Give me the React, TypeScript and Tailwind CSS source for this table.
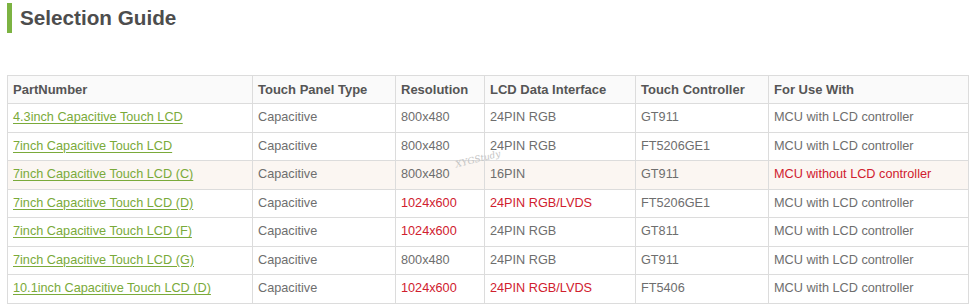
const rows = [
  { part: "4.3inch Capacitive Touch LCD", res: "800x480", iface: "24PIN RGB", ctrl: "GT911", use: "MCU with LCD controller" },
  { part: "7inch Capacitive Touch LCD", res: "800x480", iface: "24PIN RGB", ctrl: "FT5206GE1", use: "MCU with LCD controller" },
  { part: "7inch Capacitive Touch LCD (C)", res: "800x480", iface: "16PIN", ctrl: "GT911", use: "MCU without LCD controller", hl: true, redUse: true },
  { part: "7inch Capacitive Touch LCD (D)", res: "1024x600", iface: "24PIN RGB/LVDS", ctrl: "FT5206GE1", use: "MCU with LCD controller", redRes: true, redIface: true },
  { part: "7inch Capacitive Touch LCD (F)", res: "1024x600", iface: "24PIN RGB", ctrl: "GT811", use: "MCU with LCD controller", redRes: true },
  { part: "7inch Capacitive Touch LCD (G)", res: "800x480", iface: "24PIN RGB", ctrl: "GT911", use: "MCU with LCD controller" },
  { part: "10.1inch Capacitive Touch LCD (D)", res: "1024x600", iface: "24PIN RGB/LVDS", ctrl: "FT5406", use: "MCU with LCD controller", redRes: true, redIface: true },
]

const red = "text-[#d0202e]"
const gray = "text-[#6e6e6e]"

export default function App() {
  return (
    <div className="w-[972px] h-[306px] bg-white font-['Liberation_Sans',Arial,sans-serif]">
      {/* Heading */}
      <div className="flex items-center pt-[3px] pl-[7px]">
        <div className="w-[5px] h-[30px] bg-[#7cb342]" />
        <h2 className="ml-[8px] text-[20.7px] font-bold text-[#4d4d4d] leading-[30px]">Selection Guide</h2>
      </div>

      {/* Table */}
      <div className="relative mt-[42px] ml-[7px] w-[962px]">
        <table className="w-full border-collapse text-[12.7px] table-fixed">
          <colgroup>
            <col className="w-[245px]" />
            <col className="w-[143px]" />
            <col className="w-[89px]" />
            <col className="w-[151px]" />
            <col className="w-[133px]" />
            <col />
          </colgroup>
          <thead>
            <tr className="h-[28px] bg-[#fafafa]">
              {["PartNumber", "Touch Panel Type", "Resolution", "LCD Data Interface", "Touch Controller", "For Use With"].map((h) => (
                <th key={h} className="border border-[#dcdcdc] px-[5px] text-left font-bold text-[13px] text-[#555]">
                  {h}
                </th>
              ))}
            </tr>
          </thead>
          <tbody>
            {rows.map((r) => (
              <tr key={r.part} className={`h-[28.5px] ${r.hl ? "bg-[#fbf6f2]" : "bg-white"}`}>
                <td className="border border-[#dcdcdc] px-[5px]">
                  <a href="#" className="text-[#7aaa3a] underline underline-offset-2">{r.part}</a>
                </td>
                <td className={`border border-[#dcdcdc] px-[5px] ${gray}`}>Capacitive</td>
                <td className={`border border-[#dcdcdc] px-[5px] ${r.redRes ? red : gray}`}>{r.res}</td>
                <td className={`border border-[#dcdcdc] px-[5px] ${r.redIface ? red : gray}`}>{r.iface}</td>
                <td className={`border border-[#dcdcdc] px-[5px] ${gray}`}>{r.ctrl}</td>
                <td className={`border border-[#dcdcdc] px-[5px] ${r.redUse ? red : gray}`}>{r.use}</td>
              </tr>
            ))}
          </tbody>
        </table>
        {/* watermark */}
        <span className="absolute left-[448px] top-[78px] -rotate-[14deg] italic text-[9px] text-[#c4c4c4] font-['DejaVu_Serif',serif]">
          XYGStudy
        </span>
      </div>
    </div>
  )
}
